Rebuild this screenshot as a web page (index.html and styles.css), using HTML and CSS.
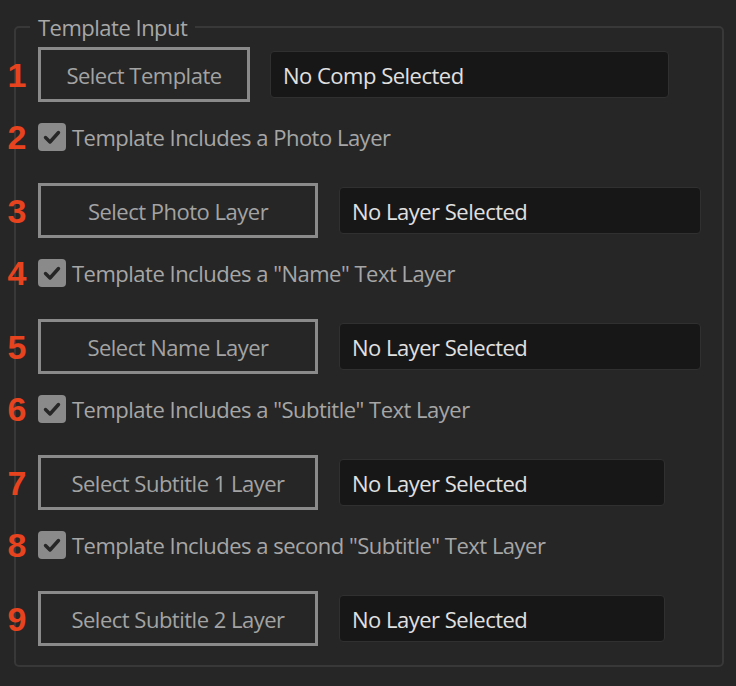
FILE: index.html
```html
<!DOCTYPE html>
<html>
<head>
<meta charset="utf-8">
<link rel="stylesheet" href="styles.css">
</head>
<body>
<fieldset class="panel">
  <legend class="legend">Template Input</legend>
  <div class="stack">
    <div class="row btn-row">
      <span class="num">1</span>
      <button class="btn btn-sm">Select Template</button>
      <div class="field field-lg">No Comp Selected</div>
    </div>
    <div class="row chk-row">
      <span class="num">2</span>
      <span class="chk"><svg viewBox="0 0 28 28" width="28" height="28"><polyline points="7.5,14.5 12,19 20.5,9.5" /></svg></span>
      <span class="lbl">Template Includes a Photo Layer</span>
    </div>
    <div class="row btn-row">
      <span class="num">3</span>
      <button class="btn">Select Photo Layer</button>
      <div class="field field-md">No Layer Selected</div>
    </div>
    <div class="row chk-row">
      <span class="num">4</span>
      <span class="chk"><svg viewBox="0 0 28 28" width="28" height="28"><polyline points="7.5,14.5 12,19 20.5,9.5" /></svg></span>
      <span class="lbl">Template Includes a "Name" Text Layer</span>
    </div>
    <div class="row btn-row">
      <span class="num">5</span>
      <button class="btn">Select Name Layer</button>
      <div class="field field-md">No Layer Selected</div>
    </div>
    <div class="row chk-row">
      <span class="num">6</span>
      <span class="chk"><svg viewBox="0 0 28 28" width="28" height="28"><polyline points="7.5,14.5 12,19 20.5,9.5" /></svg></span>
      <span class="lbl">Template Includes a "Subtitle" Text Layer</span>
    </div>
    <div class="row btn-row">
      <span class="num">7</span>
      <button class="btn">Select Subtitle 1 Layer</button>
      <div class="field field-sm">No Layer Selected</div>
    </div>
    <div class="row chk-row">
      <span class="num">8</span>
      <span class="chk"><svg viewBox="0 0 28 28" width="28" height="28"><polyline points="7.5,14.5 12,19 20.5,9.5" /></svg></span>
      <span class="lbl">Template Includes a second "Subtitle" Text Layer</span>
    </div>
    <div class="row btn-row">
      <span class="num">9</span>
      <button class="btn">Select Subtitle 2 Layer</button>
      <div class="field field-sm">No Layer Selected</div>
    </div>
  </div>
</fieldset>
</body>
</html>
```
FILE: styles.css
```css
html, body {
  margin: 0;
  padding: 0;
  background: #262626;
  height: 100%;
}
body {
  font-family: "Open Sans", "Noto Sans", sans-serif;
  font-size: 22px;
  letter-spacing: -0.5px;
  padding-top: 15px;
  box-sizing: border-box;
}
.panel {
  margin: 0 0 0 14px;
  width: 710px;
  box-sizing: border-box;
  border: 2px solid #383838;
  border-radius: 5px;
  padding: 0 0 19px 0;
}
.legend {
  margin-left: 14px;
  padding: 0 8px;
  font-size: 22px;
  line-height: 24px;
  color: #a8a8a8;
}
.stack {
  display: flex;
  flex-direction: column;
  padding: 8px 0 0 22px;
}
.row {
  position: relative;
  display: flex;
  align-items: center;
}
.btn-row {
  height: 55px;
  margin-bottom: 21px;
}
.chk-row {
  height: 28px;
  margin-bottom: 32px;
}
.row:last-child {
  margin-bottom: 0;
}
.num {
  position: absolute;
  left: -31px;
  width: 20px;
  top: 50%;
  transform: translateY(-50%);
  text-align: center;
  font-family: "Liberation Sans", Arial, sans-serif;
  font-weight: bold;
  font-size: 34px;
  line-height: 34px;
  letter-spacing: 0;
  color: #e8431f;
}
.btn {
  width: 280px;
  height: 55px;
  box-sizing: border-box;
  border: 3px solid #8a8a8a;
  background: #262626;
  color: #a3a3a3;
  font-family: inherit;
  font-size: 22px;
  letter-spacing: -0.5px;
  padding: 0;
  margin: 0 21px 0 0;
  border-radius: 0;
}
.btn-sm {
  width: 212px;
  margin-right: 20px;
}
.field {
  height: 47px;
  box-sizing: border-box;
  background: #171717;
  border: 1px solid #303030;
  border-radius: 4px;
  padding: 0 12px;
  display: flex;
  align-items: center;
  color: #e0e0e0;
  font-size: 22px;
}
.field-lg { width: 399px; }
.field-md { width: 362px; }
.field-sm { width: 326px; }
.chk {
  width: 28px;
  height: 28px;
  border-radius: 4px;
  background: #8a8a8a;
  display: block;
  flex: none;
}
.chk svg {
  display: block;
  fill: none;
  stroke: #262626;
  stroke-width: 3.4;
  stroke-linecap: round;
  stroke-linejoin: round;
}
.lbl {
  margin-left: 6px;
  color: #a6a6a6;
  font-size: 22px;
  white-space: nowrap;
}
```
